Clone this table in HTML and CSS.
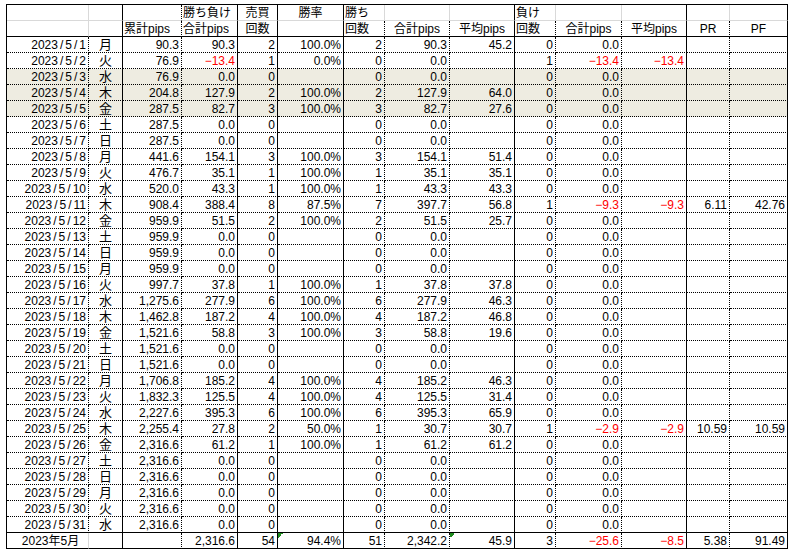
FILE: index.html
```html
<!DOCTYPE html>
<html lang="ja">
<head>
<meta charset="utf-8">
<title>2023年5月 pips</title>
<link rel="stylesheet" href="styles.css">
</head>
<body>
<table class="sheet">
<colgroup>
<col class="w-date"><col class="w-day"><col class="w-cum"><col class="w-pl"><col class="w-cnt"><col class="w-rate"><col class="w-wn"><col class="w-ws"><col class="w-wa"><col class="w-ln"><col class="w-ls"><col class="w-la"><col class="w-pr"><col class="w-pf">
</colgroup>
<thead>
<tr class="h1"><td></td><td></td><td></td><td class="hl">勝ち負け</td><td class="hc">売買</td><td class="hc">勝率</td><td class="hl">勝ち</td><td></td><td></td><td class="hl">負け</td><td></td><td></td><td></td><td></td></tr>
<tr class="h2"><td></td><td></td><td class="hl">累計pips</td><td class="hl">合計pips</td><td class="hc">回数</td><td></td><td class="hl">回数</td><td class="hc">合計pips</td><td class="hc">平均pips</td><td class="hl">回数</td><td class="hc">合計pips</td><td class="hc">平均pips</td><td class="hc">PR</td><td class="hc">PF</td></tr>
</thead>
<tbody>
<tr><td>2023<span class="sl">/</span>5<span class="sl">/</span>1</td><td>月</td><td>90.3</td><td>90.3</td><td>2</td><td>100.0%</td><td>2</td><td>90.3</td><td>45.2</td><td>0</td><td>0.0</td><td></td><td></td><td></td></tr>
<tr><td>2023<span class="sl">/</span>5<span class="sl">/</span>2</td><td>火</td><td>76.9</td><td class="neg">−13.4</td><td>1</td><td>0.0%</td><td>0</td><td>0.0</td><td></td><td>1</td><td class="neg">−13.4</td><td class="neg">−13.4</td><td></td><td></td></tr>
<tr class="off"><td>2023<span class="sl">/</span>5<span class="sl">/</span>3</td><td>水</td><td>76.9</td><td>0.0</td><td>0</td><td></td><td>0</td><td>0.0</td><td></td><td>0</td><td>0.0</td><td></td><td></td><td></td></tr>
<tr class="off"><td>2023<span class="sl">/</span>5<span class="sl">/</span>4</td><td>木</td><td>204.8</td><td>127.9</td><td>2</td><td>100.0%</td><td>2</td><td>127.9</td><td>64.0</td><td>0</td><td>0.0</td><td></td><td></td><td></td></tr>
<tr class="off"><td>2023<span class="sl">/</span>5<span class="sl">/</span>5</td><td>金</td><td>287.5</td><td>82.7</td><td>3</td><td>100.0%</td><td>3</td><td>82.7</td><td>27.6</td><td>0</td><td>0.0</td><td></td><td></td><td></td></tr>
<tr><td>2023<span class="sl">/</span>5<span class="sl">/</span>6</td><td>土</td><td>287.5</td><td>0.0</td><td>0</td><td></td><td>0</td><td>0.0</td><td></td><td>0</td><td>0.0</td><td></td><td></td><td></td></tr>
<tr><td>2023<span class="sl">/</span>5<span class="sl">/</span>7</td><td>日</td><td>287.5</td><td>0.0</td><td>0</td><td></td><td>0</td><td>0.0</td><td></td><td>0</td><td>0.0</td><td></td><td></td><td></td></tr>
<tr><td>2023<span class="sl">/</span>5<span class="sl">/</span>8</td><td>月</td><td>441.6</td><td>154.1</td><td>3</td><td>100.0%</td><td>3</td><td>154.1</td><td>51.4</td><td>0</td><td>0.0</td><td></td><td></td><td></td></tr>
<tr><td>2023<span class="sl">/</span>5<span class="sl">/</span>9</td><td>火</td><td>476.7</td><td>35.1</td><td>1</td><td>100.0%</td><td>1</td><td>35.1</td><td>35.1</td><td>0</td><td>0.0</td><td></td><td></td><td></td></tr>
<tr><td>2023<span class="sl">/</span>5<span class="sl">/</span>10</td><td>水</td><td>520.0</td><td>43.3</td><td>1</td><td>100.0%</td><td>1</td><td>43.3</td><td>43.3</td><td>0</td><td>0.0</td><td></td><td></td><td></td></tr>
<tr><td>2023<span class="sl">/</span>5<span class="sl">/</span>11</td><td>木</td><td>908.4</td><td>388.4</td><td>8</td><td>87.5%</td><td>7</td><td>397.7</td><td>56.8</td><td>1</td><td class="neg">−9.3</td><td class="neg">−9.3</td><td>6.11</td><td>42.76</td></tr>
<tr><td>2023<span class="sl">/</span>5<span class="sl">/</span>12</td><td>金</td><td>959.9</td><td>51.5</td><td>2</td><td>100.0%</td><td>2</td><td>51.5</td><td>25.7</td><td>0</td><td>0.0</td><td></td><td></td><td></td></tr>
<tr><td>2023<span class="sl">/</span>5<span class="sl">/</span>13</td><td>土</td><td>959.9</td><td>0.0</td><td>0</td><td></td><td>0</td><td>0.0</td><td></td><td>0</td><td>0.0</td><td></td><td></td><td></td></tr>
<tr><td>2023<span class="sl">/</span>5<span class="sl">/</span>14</td><td>日</td><td>959.9</td><td>0.0</td><td>0</td><td></td><td>0</td><td>0.0</td><td></td><td>0</td><td>0.0</td><td></td><td></td><td></td></tr>
<tr><td>2023<span class="sl">/</span>5<span class="sl">/</span>15</td><td>月</td><td>959.9</td><td>0.0</td><td>0</td><td></td><td>0</td><td>0.0</td><td></td><td>0</td><td>0.0</td><td></td><td></td><td></td></tr>
<tr><td>2023<span class="sl">/</span>5<span class="sl">/</span>16</td><td>火</td><td>997.7</td><td>37.8</td><td>1</td><td>100.0%</td><td>1</td><td>37.8</td><td>37.8</td><td>0</td><td>0.0</td><td></td><td></td><td></td></tr>
<tr><td>2023<span class="sl">/</span>5<span class="sl">/</span>17</td><td>水</td><td>1,275.6</td><td>277.9</td><td>6</td><td>100.0%</td><td>6</td><td>277.9</td><td>46.3</td><td>0</td><td>0.0</td><td></td><td></td><td></td></tr>
<tr><td>2023<span class="sl">/</span>5<span class="sl">/</span>18</td><td>木</td><td>1,462.8</td><td>187.2</td><td>4</td><td>100.0%</td><td>4</td><td>187.2</td><td>46.8</td><td>0</td><td>0.0</td><td></td><td></td><td></td></tr>
<tr><td>2023<span class="sl">/</span>5<span class="sl">/</span>19</td><td>金</td><td>1,521.6</td><td>58.8</td><td>3</td><td>100.0%</td><td>3</td><td>58.8</td><td>19.6</td><td>0</td><td>0.0</td><td></td><td></td><td></td></tr>
<tr><td>2023<span class="sl">/</span>5<span class="sl">/</span>20</td><td>土</td><td>1,521.6</td><td>0.0</td><td>0</td><td></td><td>0</td><td>0.0</td><td></td><td>0</td><td>0.0</td><td></td><td></td><td></td></tr>
<tr><td>2023<span class="sl">/</span>5<span class="sl">/</span>21</td><td>日</td><td>1,521.6</td><td>0.0</td><td>0</td><td></td><td>0</td><td>0.0</td><td></td><td>0</td><td>0.0</td><td></td><td></td><td></td></tr>
<tr><td>2023<span class="sl">/</span>5<span class="sl">/</span>22</td><td>月</td><td>1,706.8</td><td>185.2</td><td>4</td><td>100.0%</td><td>4</td><td>185.2</td><td>46.3</td><td>0</td><td>0.0</td><td></td><td></td><td></td></tr>
<tr><td>2023<span class="sl">/</span>5<span class="sl">/</span>23</td><td>火</td><td>1,832.3</td><td>125.5</td><td>4</td><td>100.0%</td><td>4</td><td>125.5</td><td>31.4</td><td>0</td><td>0.0</td><td></td><td></td><td></td></tr>
<tr><td>2023<span class="sl">/</span>5<span class="sl">/</span>24</td><td>水</td><td>2,227.6</td><td>395.3</td><td>6</td><td>100.0%</td><td>6</td><td>395.3</td><td>65.9</td><td>0</td><td>0.0</td><td></td><td></td><td></td></tr>
<tr><td>2023<span class="sl">/</span>5<span class="sl">/</span>25</td><td>木</td><td>2,255.4</td><td>27.8</td><td>2</td><td>50.0%</td><td>1</td><td>30.7</td><td>30.7</td><td>1</td><td class="neg">−2.9</td><td class="neg">−2.9</td><td>10.59</td><td>10.59</td></tr>
<tr><td>2023<span class="sl">/</span>5<span class="sl">/</span>26</td><td>金</td><td>2,316.6</td><td>61.2</td><td>1</td><td>100.0%</td><td>1</td><td>61.2</td><td>61.2</td><td>0</td><td>0.0</td><td></td><td></td><td></td></tr>
<tr><td>2023<span class="sl">/</span>5<span class="sl">/</span>27</td><td>土</td><td>2,316.6</td><td>0.0</td><td>0</td><td></td><td>0</td><td>0.0</td><td></td><td>0</td><td>0.0</td><td></td><td></td><td></td></tr>
<tr><td>2023<span class="sl">/</span>5<span class="sl">/</span>28</td><td>日</td><td>2,316.6</td><td>0.0</td><td>0</td><td></td><td>0</td><td>0.0</td><td></td><td>0</td><td>0.0</td><td></td><td></td><td></td></tr>
<tr><td>2023<span class="sl">/</span>5<span class="sl">/</span>29</td><td>月</td><td>2,316.6</td><td>0.0</td><td>0</td><td></td><td>0</td><td>0.0</td><td></td><td>0</td><td>0.0</td><td></td><td></td><td></td></tr>
<tr><td>2023<span class="sl">/</span>5<span class="sl">/</span>30</td><td>火</td><td>2,316.6</td><td>0.0</td><td>0</td><td></td><td>0</td><td>0.0</td><td></td><td>0</td><td>0.0</td><td></td><td></td><td></td></tr>
<tr class="last"><td>2023<span class="sl">/</span>5<span class="sl">/</span>31</td><td>水</td><td>2,316.6</td><td>0.0</td><td>0</td><td></td><td>0</td><td>0.0</td><td></td><td>0</td><td>0.0</td><td></td><td></td><td></td></tr>
</tbody>
<tfoot>
<tr class="tot"><td class="month">2023年5月</td><td></td><td></td><td>2,316.6</td><td>54</td><td class="flag">94.4%</td><td>51</td><td>2,342.2</td><td class="flag">45.9</td><td>3</td><td class="neg">−25.6</td><td class="neg">−8.5</td><td>5.38</td><td>91.49</td></tr>
</tfoot>
</table>
</body>
</html>
```
FILE: styles.css
```css
html, body {
  margin: 0;
  padding: 0;
  background: #ffffff;
}

.sheet {
  margin: 4px 0 0 6px;
  border-collapse: separate;
  border-spacing: 0;
  table-layout: fixed;
  width: 782px;
  border-top: 1px solid #000;
  border-left: 1px solid #000;
  font-family: "Liberation Sans", "Noto Sans CJK JP", sans-serif;
  font-size: 12px;
  color: #000;
}

.w-date { width: 82px; }
.w-day { width: 34px; }
.w-cum { width: 59px; }
.w-pl { width: 56px; }
.w-cnt { width: 40px; }
.w-rate { width: 66px; }
.w-wn { width: 41px; }
.w-ws { width: 65px; }
.w-wa { width: 65px; }
.w-ln { width: 41px; }
.w-ls { width: 66px; }
.w-la { width: 65px; }
.w-pr { width: 43px; }
.w-pf { width: 58px; }

.sheet td {
  box-sizing: border-box;
  height: 16px;
  padding: 1px 2px 0 0;
  line-height: 14px;
  text-align: right;
  white-space: nowrap;
  overflow: visible;
  border-right: 1px dotted #000;
  border-bottom: 1px dotted #000;
  vertical-align: top;
}

.sheet .sl {
  padding: 0 2px;
}

/* solid vertical rules */
.sheet td:nth-child(2),
.sheet td:nth-child(4),
.sheet td:nth-child(5),
.sheet td:nth-child(6),
.sheet td:nth-child(9),
.sheet td:nth-child(12),
.sheet td:nth-child(14) {
  border-right-style: solid;
}

.sheet td:nth-child(2) {
  text-align: center;
  padding-right: 0;
  font-size: 13px;
}

/* header */
.sheet .h1 td {
  border-bottom: 1px solid #d9d9d9;
}
.sheet .h1 td:nth-child(1),
.sheet .h1 td:nth-child(7),
.sheet .h1 td:nth-child(8),
.sheet .h1 td:nth-child(10),
.sheet .h1 td:nth-child(11),
.sheet .h1 td:nth-child(13),
.sheet .h2 td:nth-child(1),
.sheet .tot td:nth-child(1) {
  border-right: 1px solid #d9d9d9;
}
.sheet .h2 td {
  border-bottom-style: solid;
}

.sheet .hl {
  text-align: left;
  padding: 1px 0 0 1px;
}
.sheet .hc {
  text-align: center;
  padding: 1px 0 0 0;
}

/* body */
.sheet .off td {
  background: #eeece1;
}
.sheet .last td {
  border-bottom-style: solid;
}
.sheet .neg {
  color: #ff0000;
}

/* total */
.sheet .tot td {
  border-bottom-style: solid;
}
.sheet .tot .month {
  text-align: center;
  padding: 1px 0 0 6px;
}
.sheet .flag {
  background: linear-gradient(135deg, #1f8a1f 50%, transparent 50%) no-repeat left top / 5px 5px;
}
```
